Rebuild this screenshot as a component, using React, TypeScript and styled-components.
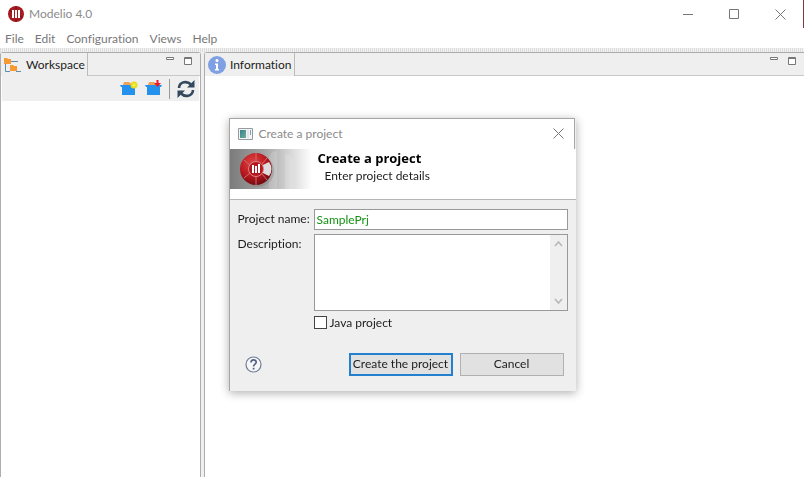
import React from "react";
import styled, { createGlobalStyle } from "styled-components";

const GlobalStyle = createGlobalStyle`
  * { box-sizing: border-box; }
  body { margin: 0; background: #fff; overflow: hidden; }
  body, button, input, textarea {
    font-family: Lato, "Open Sans", sans-serif;
    font-size: 12px;
    line-height: 16px;
    font-variant-ligatures: none;
    color: #1c1c1c;
  }
  svg { display: block; flex: none; }
`;

const Window = styled.div`
  min-height: 100vh;
  display: flex;
  flex-direction: column;
`;

const TitleBar = styled.header`
  height: 28px;
  display: flex;
  align-items: center;
  padding-left: 8px;
  gap: 5px;
  color: #8b8b8b;
`;

const WindowTitle = styled.h1`
  margin: 0;
  flex: 1;
  font-size: 12px;
  font-weight: 400;
`;

const PlainButton = styled.button`
  padding: 0;
  border: 0;
  background: none;
  display: flex;
  align-items: center;
  justify-content: center;
`;

const CaptionButtons = styled.div`
  align-self: stretch;
  display: flex;
  border-right: 1px solid #7c3a3f;
`;

const CaptionButton = styled(PlainButton)`
  width: 46px;
`;

const MenuBar = styled.nav`
  height: 20px;
  display: flex;
  align-items: center;
  gap: 11px;
  padding: 2px 5px 0;
`;

const MenuItem = styled(PlainButton)`
  color: #787878;
`;

const Trim = styled.div`
  height: 4px;
  background: repeating-linear-gradient(90deg, #dcdcdc 0 1px, #f3f3f3 1px 2px);
`;

const Workbench = styled.main`
  flex: 1;
  display: grid;
  grid-template-columns: 201px 3px 1fr;
  background: #efefef;
`;

const Panel = styled.section<{ $open?: boolean }>`
  display: flex;
  flex-direction: column;
  grid-column: ${(p) => (p.$open ? 3 : 1)};
  background: #fff;
  border: solid #adadad;
  border-width: ${(p) => (p.$open ? "1px 0 0 1px" : "1px 1px 0 1px")};
  border-top-left-radius: 3px;
  border-top-right-radius: ${(p) => (p.$open ? "0" : "3px")};
`;

const PanelHead = styled.div`
  height: 23px;
  display: flex;
  background: #efefef;
`;

const Tab = styled.div`
  display: flex;
  align-items: center;
  gap: 4px;
  padding: 0 2px 0 3px;
  border-right: 1px solid #bcbcbc;
`;

const PanelTitle = styled.h2`
  margin: 0;
  font-size: 12px;
  font-weight: 400;
`;

const PanelTools = styled.div`
  flex: 1;
  display: flex;
  justify-content: flex-end;
  align-items: flex-start;
  gap: 9px;
  padding: 4px 7px 0;
  border-bottom: 1px solid #c8c8c8;
`;

const ToolBar = styled.div`
  height: 25px;
  margin: 0 1px;
  display: flex;
  align-items: center;
  justify-content: flex-end;
  gap: 7px;
  padding-right: 4px;
  background: #efefef;
`;

const Divider = styled.span`
  width: 1px;
  height: 20px;
  background: #999;
`;

const Overlay = styled.div`
  position: fixed;
  inset: 0;
  display: flex;
  align-items: center;
  justify-content: center;
  padding-top: 31px;
`;

const Dialog = styled.div`
  width: 347px;
  background: #efefef;
  border-left: 1px solid #a5a5a5;
  box-shadow: 0 2px 9px rgba(0, 0, 0, 0.32);
`;

const DialogBar = styled.div`
  height: 31px;
  margin-right: 1px;
  display: flex;
  align-items: center;
  gap: 6px;
  padding-left: 8px;
  border: solid #a5a5a5;
  border-width: 1px 1px 0 0;
  background: #fff;
  color: #8b8b8b;
`;

const DialogCaption = styled.span`
  flex: 1;
`;

const CloseButton = styled(PlainButton)`
  width: 30px;
  height: 28px;
`;

const Banner = styled.div`
  height: 51px;
  display: flex;
  align-items: flex-start;
  gap: 6px;
  background: #fff;
  border-bottom: 1px solid #b5b5b5;
`;

const BannerTitle = styled.h2`
  margin: 0;
  font-family: "Open Sans", sans-serif;
  font-size: 13px;
  line-height: 19px;
  font-weight: 700;
  color: #000;
`;

const BannerNote = styled.p`
  margin: 0 0 0 7px;
`;

const Form = styled.form`
  padding: 9px 8px 15px;
`;

const Fields = styled.div`
  display: grid;
  grid-template-columns: 76px 1fr;
  row-gap: 4px;
`;

const FieldLabel = styled.label`
  padding-top: 2px;
  white-space: nowrap;
`;

const TextInput = styled.input`
  width: 100%;
  height: 21px;
  padding: 0 2px;
  border: 1px solid #999;
  background: #fff;
  color: #149314;
  outline: none;
`;

const AreaFrame = styled.div`
  height: 77px;
  display: flex;
  border: 1px solid #999;
  background: #fff;
`;

const TextArea = styled.textarea`
  flex: 1;
  min-width: 0;
  padding: 2px;
  border: 0;
  outline: none;
  resize: none;
  background: transparent;
`;

const ScrollTrack = styled.div`
  width: 17px;
  display: flex;
  flex-direction: column;
  justify-content: space-between;
  padding: 5px 0;
  background: #efefef;
`;

const CheckLabel = styled.label`
  grid-column: 2;
  justify-self: start;
  display: flex;
  align-items: center;
  gap: 3px;
`;

const CheckBox = styled.input`
  appearance: none;
  width: 13px;
  height: 13px;
  margin: 0;
  border: 1px solid #444;
  background: #fff;
  &:checked { background: #1c7cd0; }
`;

const Actions = styled.div`
  display: flex;
  align-items: center;
  gap: 7px;
  margin-top: 22px;
  padding: 0 4px 0 7px;
`;

const HelpButton = styled(PlainButton)`
  margin-right: auto;
`;

const PushButton = styled.button<{ $primary?: boolean }>`
  width: 104px;
  height: 23px;
  padding: 0;
  white-space: nowrap;
  background: #e1e1e1;
  border: ${(p) => (p.$primary ? "2px solid #2380cf" : "1px solid #b0b0b0")};
`;

const LogoIcon = () => (
  <svg width="16" height="16" viewBox="0 0 16 16">
    <circle cx="8" cy="8" r="8" fill="#a51b22" />
    <path d="M8 0v3M8 13v3M1 4l3 2M12 10l3 2" stroke="#741015" />
    <path d="M4 4h2v8H4zM7 4h2v8H7zM10 4h2v8h-2z" fill="#fff" />
  </svg>
);

const MinimizeIcon = () => (
  <svg width="10" height="11" viewBox="0 0 10 11"><path d="M0 5.5h10" stroke="#777" /></svg>
);

const MaximizeIcon = () => (
  <svg width="11" height="11" viewBox="0 0 11 11"><path d="M.5.5h9v9h-9z" fill="none" stroke="#777" /></svg>
);

const CloseIcon = () => (
  <svg width="11" height="11" viewBox="0 0 11 11"><path d="M.5.5l10 10M10.5.5l-10 10" stroke="#777" fill="none" /></svg>
);

const ViewMinIcon = () => (
  <svg width="9" height="9" viewBox="0 0 9 9"><path d="M.5.5h7v2h-7z" fill="#fff" stroke="#777" /></svg>
);

const ViewMaxIcon = () => (
  <svg width="9" height="9" viewBox="0 0 9 9">
    <path d="M.5.5h7v7h-7z" fill="#fff" stroke="#777" />
    <path d="M0 1.5h8" stroke="#777" />
  </svg>
);

const TreeIcon = () => (
  <svg width="18" height="16" viewBox="0 0 18 16">
    <path d="M1.5 6v8.500H6M7 4.500h7M12 14.500h5" fill="none" stroke="#5c8dae" />
    <path d="M0 1h3l1 1h3v5H0zM6 8h3l1 1h3v5H6z" fill="#f79a34" />
  </svg>
);

const InfoIcon = () => (
  <svg width="18" height="18" viewBox="0 0 18 18">
    <circle cx="9" cy="9" r="9" fill="#7fa0e2" />
    <circle cx="9" cy="4.500" r="1.500" fill="#fff" />
    <path d="M7 7.500h3V13h1v1.500H7V13h1V9H7z" fill="#fff" />
  </svg>
);

const BoxShape = () => (
  <>
    <path d="M3 5l1-3h5l1 1h2v3H3z" fill="#eda15a" />
    <path d="M0 5h17l-1 2h-1v8H2V7H1z" fill="#2492ed" />
  </>
);

const NewBoxIcon = () => (
  <svg width="18" height="17" viewBox="0 0 18 17">
    <BoxShape />
    <circle cx="14" cy="5" r="3.500" fill="#e9dc1e" />
    <circle cx="14" cy="5" r="1.500" fill="#f8f34c" />
  </svg>
);

const ImportBoxIcon = () => (
  <svg width="17" height="17" viewBox="0 0 17 17">
    <BoxShape />
    <path d="M11.500 0h2v3h2.500l-3.500 4L9 3h2.500z" fill="#ed1825" />
  </svg>
);

const RefreshIcon = () => (
  <svg width="18" height="18" viewBox="0 0 18 18" fill="none" stroke="#34495e" strokeWidth="2.600">
    <path d="M2 8C2.500 1.500 10 .500 14 4.500M16 10C15.500 16.500 8 17.500 4 13.500" />
    <path d="M17.500 0v7.500H10zM.5 18v-7.500H8z" fill="#34495e" stroke="none" />
  </svg>
);

const AppletIcon = () => (
  <svg width="15" height="12" viewBox="0 0 15 12">
    <defs>
      <linearGradient id="applet" x2="1" y2="1">
        <stop offset="0" stopColor="#3d7d91" /><stop offset="1" stopColor="#6bb294" />
      </linearGradient>
    </defs>
    <path d="M.5.5h14v11H.5z" fill="#f5f5f5" stroke="#929ba0" />
    <path d="M2 2h6v8H2z" fill="url(#applet)" />
    <path d="M9 2h2v8H9z" fill="#dfe5e8" />
    <path d="M12.500 2v5" stroke="#88a1a9" />
  </svg>
);

const BannerArt = () => (
  <svg width="82" height="40" viewBox="0 0 82 40">
    <defs>
      <linearGradient id="fade">
        <stop offset="0" stopColor="#7b7b7b" /><stop offset=".4" stopColor="#a2a2a2" />
        <stop offset=".75" stopColor="#d9d9d9" /><stop offset="1" stopColor="#fff" />
      </linearGradient>
      <radialGradient id="ball" cx=".4" cy=".3" r=".7">
        <stop offset="0" stopColor="#e04444" /><stop offset=".6" stopColor="#b91920" /><stop offset="1" stopColor="#750b10" />
      </radialGradient>
    </defs>
    <path d="M0 0h82v40H0z" fill="url(#fade)" />
    <path d="M39 40V12q0-10 8-10v38zM55 40V5q8 0 8 9v26z" fill="#fff" opacity=".15" />
    <circle cx="28" cy="22" r="16" fill="#777" opacity=".35" />
    <circle cx="26" cy="20" r="16" fill="url(#ball)" />
    <path d="M33 16l6-3q5 7 0 14l-6-3z" fill="#ddd" />
    <path d="M26 4v9M26 27v9M14 11l6 5M14 29l6-5M32 15l5-6M32 25l5 6" stroke="#cf6c70" />
    <circle cx="26" cy="20" r="7.500" fill="#b5171f" stroke="#d98485" />
    <path d="M22 16h2v8h-2zM25 17h2v7h-2zM28 15h2v9h-2z" fill="#fff" />
  </svg>
);

const Chevron = ({ down }: { down?: boolean }) => (
  <svg width="9" height="7" viewBox="0 0 9 7">
    <path d={down ? "M1 1l3.500 4L8 1" : "M1 6l3.500-4L8 6"} fill="none" stroke="#b8b8b8" strokeWidth="1.600" />
  </svg>
);

const HelpIcon = () => (
  <svg width="17" height="17" viewBox="0 0 17 17" fill="none">
    <circle cx="8.500" cy="8.500" r="7.500" fill="#f7f7f9" stroke="#707d95" strokeWidth="1.200" />
    <path d="M6 6.500C6 3 11.200 3.200 11.200 6.200C11.200 8.200 8.600 8 8.600 10.500" stroke="#526383" strokeWidth="1.700" />
    <path d="M7.700 11.800h1.800v1.700H7.700z" fill="#526383" />
  </svg>
);

const ViewControls = () => (
  <PanelTools>
    <PlainButton aria-label="Minimize view"><ViewMinIcon /></PlainButton>
    <PlainButton aria-label="Maximize view"><ViewMaxIcon /></PlainButton>
  </PanelTools>
);

const menus = ["File", "Edit", "Configuration", "Views", "Help"];

export default function App() {
  return (
    <>
      <GlobalStyle />
      <Window>
        <TitleBar>
          <LogoIcon />
          <WindowTitle>Modelio 4.0</WindowTitle>
          <CaptionButtons>
            <CaptionButton aria-label="Minimize"><MinimizeIcon /></CaptionButton>
            <CaptionButton aria-label="Maximize"><MaximizeIcon /></CaptionButton>
            <CaptionButton aria-label="Close"><CloseIcon /></CaptionButton>
          </CaptionButtons>
        </TitleBar>
        <MenuBar>
          {menus.map((name) => <MenuItem key={name}>{name}</MenuItem>)}
        </MenuBar>
        <Trim />
        <Workbench>
          <Panel>
            <PanelHead>
              <Tab><TreeIcon /><PanelTitle>Workspace</PanelTitle></Tab>
              <ViewControls />
            </PanelHead>
            <ToolBar>
              <PlainButton aria-label="New project"><NewBoxIcon /></PlainButton>
              <PlainButton aria-label="Import project"><ImportBoxIcon /></PlainButton>
              <Divider />
              <PlainButton aria-label="Refresh"><RefreshIcon /></PlainButton>
            </ToolBar>
          </Panel>
          <Panel $open>
            <PanelHead>
              <Tab><InfoIcon /><PanelTitle>Information</PanelTitle></Tab>
              <ViewControls />
            </PanelHead>
          </Panel>
        </Workbench>
      </Window>
      <Overlay>
        <Dialog role="dialog" aria-labelledby="dialog-title">
          <DialogBar>
            <AppletIcon />
            <DialogCaption>Create a project</DialogCaption>
            <CloseButton aria-label="Close dialog"><CloseIcon /></CloseButton>
          </DialogBar>
          <Banner>
            <BannerArt />
            <div>
              <BannerTitle id="dialog-title">Create a project</BannerTitle>
              <BannerNote>Enter project details</BannerNote>
            </div>
          </Banner>
          <Form onSubmit={(e) => e.preventDefault()}>
            <Fields>
              <FieldLabel htmlFor="name">Project name:</FieldLabel>
              <TextInput id="name" defaultValue="SamplePrj" spellCheck={false} />
              <FieldLabel htmlFor="description">Description:</FieldLabel>
              <AreaFrame>
                <TextArea id="description" />
                <ScrollTrack>
                  <PlainButton type="button" aria-label="Scroll up"><Chevron /></PlainButton>
                  <PlainButton type="button" aria-label="Scroll down"><Chevron down /></PlainButton>
                </ScrollTrack>
              </AreaFrame>
              <CheckLabel><CheckBox type="checkbox" />Java project</CheckLabel>
            </Fields>
            <Actions>
              <HelpButton type="button" aria-label="Help"><HelpIcon /></HelpButton>
              <PushButton type="submit" $primary>Create the project</PushButton>
              <PushButton type="button">Cancel</PushButton>
            </Actions>
          </Form>
        </Dialog>
      </Overlay>
    </>
  );
}
